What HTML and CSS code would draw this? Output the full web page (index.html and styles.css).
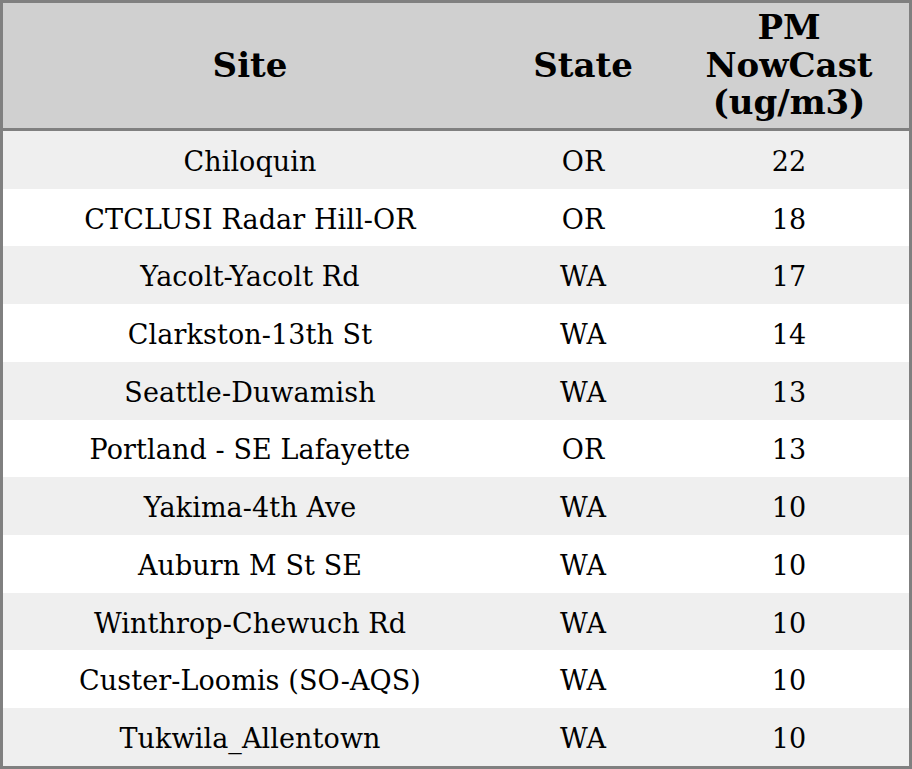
FILE: index.html
```html
<!DOCTYPE html>
<html>
<head>
<meta charset="utf-8">
<link rel="stylesheet" href="styles.css">
</head>
<body>
<table class="aq">
  <thead>
    <tr><th class="c-site">Site</th><th class="c-state">State</th><th class="c-pm"><span class="wrap">PM NowCast (ug/m3)</span></th></tr>
  </thead>
  <tbody>
    <tr><td>Chiloquin</td><td>OR</td><td>22</td></tr>
    <tr><td>CTCLUSI Radar Hill-OR</td><td>OR</td><td>18</td></tr>
    <tr><td>Yacolt-Yacolt Rd</td><td>WA</td><td>17</td></tr>
    <tr><td>Clarkston-13th St</td><td>WA</td><td>14</td></tr>
    <tr><td>Seattle-Duwamish</td><td>WA</td><td>13</td></tr>
    <tr><td>Portland - SE Lafayette</td><td>OR</td><td>13</td></tr>
    <tr><td>Yakima-4th Ave</td><td>WA</td><td>10</td></tr>
    <tr><td>Auburn M St SE</td><td>WA</td><td>10</td></tr>
    <tr><td>Winthrop-Chewuch Rd</td><td>WA</td><td>10</td></tr>
    <tr><td>Custer-Loomis (SO-AQS)</td><td>WA</td><td>10</td></tr>
    <tr><td>Tukwila_Allentown</td><td>WA</td><td>10</td></tr>
  </tbody>
</table>
</body>
</html>
```
FILE: styles.css
```css
html, body { margin: 0; padding: 0; background: #fff; }
.aq {
  width: 912px;
  height: 769px;
  border-collapse: collapse;
  border: 3px solid #808080;
  font-family: "DejaVu Serif", serif;
  color: #000;
  table-layout: fixed;
}
.aq th {
  background: #d0d0d0;
  font-size: 34px;
  font-weight: bold;
  line-height: 37.5px;
  height: 125px;
  padding: 0;
  border-bottom: 3px solid #808080;
  text-align: center;
  vertical-align: middle;
}
.c-site { width: 494px; }
.c-state { width: 172px; }
.c-pm { width: 240px; }
.wrap { display: block; max-width: 200px; margin: 0 auto; }
.aq td {
  font-size: 27px;
  letter-spacing: 0.1px;
  text-align: center;
  vertical-align: middle;
  padding: 3px 0 0;
  height: 54.7px;
}
.aq tbody tr:nth-child(odd) { background: #efefef; }
.aq tbody tr:nth-child(even) { background: #fff; }
```
